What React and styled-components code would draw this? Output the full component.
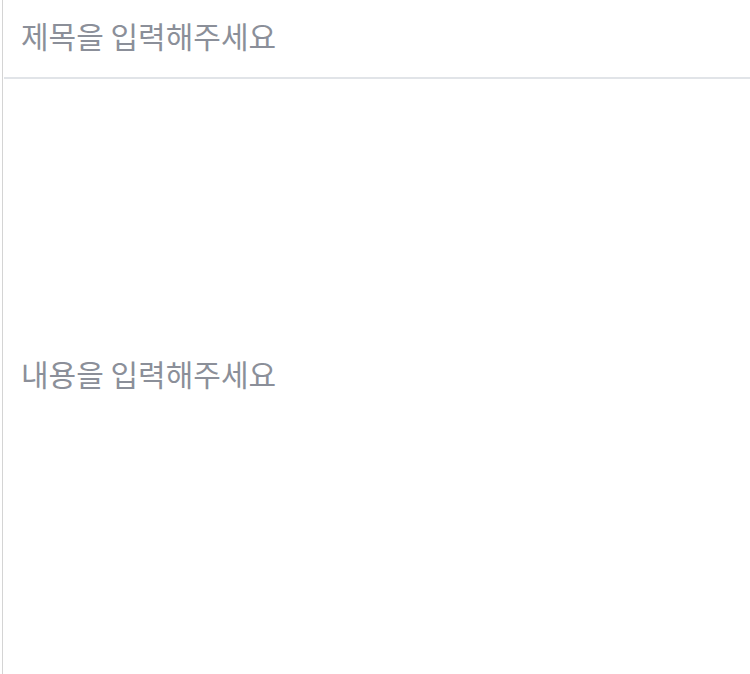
import styled, { createGlobalStyle } from "styled-components";

const GlobalStyle = createGlobalStyle`
  html, body {
    margin: 0;
    padding: 0;
    background: #ffffff;
  }
  body {
    font-family: "Noto Sans CJK KR", "Noto Sans", sans-serif;
  }
`;

const Editor = styled.div`
  margin-left: 2px;
  height: 674px;
  border-left: 1px solid #d4d4d4;
  display: flex;
  flex-direction: column;
  overflow: hidden;
`;

const TitleRow = styled.div`
  height: 79px;
  flex-shrink: 0;
  box-sizing: border-box;
  display: flex;
  align-items: center;
  padding: 0 0 7px 17px;
  border-bottom: 2px solid #e1e4e8;
  margin-left: 1px;
`;

const Placeholder = styled.span`
  font-size: 30px;
  line-height: 1;
  color: #8b8f99;
  font-weight: 400;
`;

const Body = styled.div`
  flex: 1;
  display: flex;
  align-items: center;
  padding: 0 0 8px 17px;
  margin-left: 1px;
`;

const App = () => {
  return (
    <>
      <GlobalStyle />
      <Editor>
        <TitleRow>
          <Placeholder>제목을 입력해주세요</Placeholder>
        </TitleRow>
        <Body>
          <Placeholder>내용을 입력해주세요</Placeholder>
        </Body>
      </Editor>
    </>
  );
};

export default App;
